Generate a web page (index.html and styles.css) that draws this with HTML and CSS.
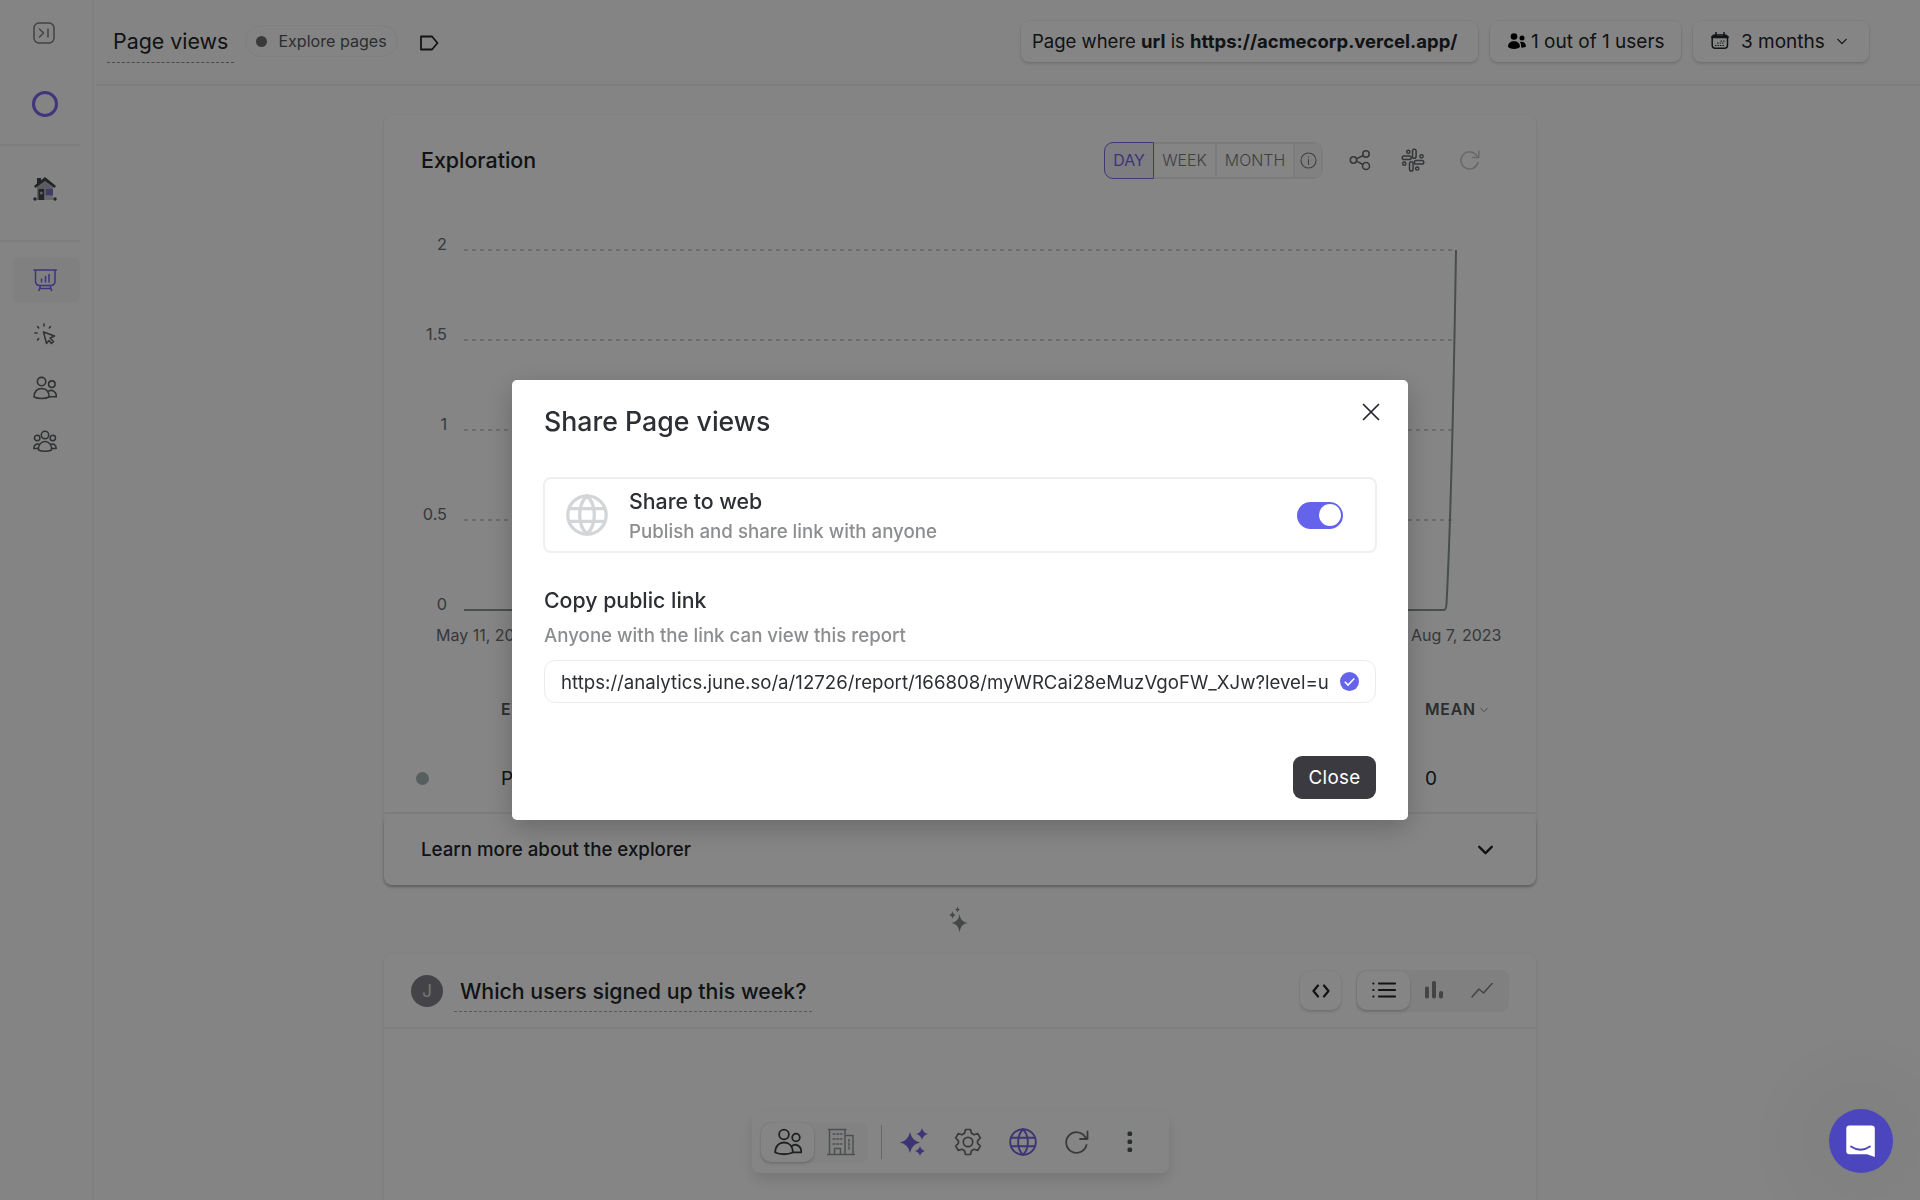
FILE: index.html
```html
<!DOCTYPE html>
<html lang="en">
<head>
    <meta charset="UTF-8">
    <meta name="viewport" content="width=device-width, initial-scale=1.0">
    <title>Page views</title>
    <link rel="stylesheet" href="styles.css">
</head>
<body>
    <!-- shared icons -->
    <svg class="defs" width="0" height="0">
        <symbol id="users" viewBox="0 0 28 28">
            <circle cx="10" cy="6.5" r="4.9"/>
            <circle cx="22" cy="9.5" r="3.8"/>
            <path d="M1.2 24.5C1.2 18 5 14.5 10 14.5S18.8 18 18.8 24.5C14 26.8 6 26.8 1.2 24.5z"/>
            <path d="M17.5 18.2C22 14.8 27.5 18 27.3 24.3H19"/>
        </symbol>
        <symbol id="globe" viewBox="0 0 28 28">
            <circle cx="14" cy="14" r="12.8"/>
            <path d="M14 1.2C7.5 7.5 7.5 20.5 14 26.8M14 1.2C20.5 7.5 20.5 20.5 14 26.8M2.2 9.7H25.8M2.2 18.3H25.8"/>
        </symbol>
        <symbol id="refresh" viewBox="0 0 24 24">
            <path d="M21.5 15A10.3 10.3 0 1 1 20.5 7.5L22 9M22.5 1.5V9H15"/>
        </symbol>
        <symbol id="chevron" viewBox="0 0 12 8">
            <path d="M1 1.5L6 6.5L11 1.5"/>
        </symbol>
    </svg>

    <div class="app">
        <nav class="sidebar">
            <div class="side-top">
                <svg class="icon collapse" width="22" height="22" viewBox="0 0 22 22"><rect x="1" y="1" width="20" height="20" rx="5"/><path d="M6.5 7L10.5 11L6.5 15M15 7V15"/></svg>
                <div class="ring"></div>
            </div>
            <div class="side-home">
                <svg width="24" height="24" viewBox="0 0 24 24">
                    <path fill="#b0b3bb" d="M4 10L12 4L20 10V23H4z"/>
                    <path fill="#44464c" d="M4 1H8V5L4 8zM12 0L23 9L21.5 11L12 4L2.5 11L1 9z"/>
                    <rect fill="#44464c" x="5.5" y="12" width="5.5" height="11"/>
                    <circle fill="#b9bbc2" cx="8.3" cy="16" r="1.5"/>
                    <rect fill="#7a76c8" x="13" y="12" width="7" height="6"/>
                    <rect fill="#c8cad2" x="12" y="19" width="8" height="4"/>
                    <circle fill="#44464c" cx="2" cy="22" r="1.7"/>
                    <circle fill="#44464c" cx="22" cy="22" r="1.7"/>
                </svg>
            </div>
            <div class="side-links">
                <a class="side-link active"><svg class="icon" width="24" height="24" viewBox="0 0 24 24"><path d="M1 2H23.5M2.5 2V13Q2.5 17.5 7 17.5H17.5Q22 17.5 22 13V2M7.5 17.5L6 22.5M17 17.5L18.5 22.5M7 20.5H17.5M8.5 11V14M12.5 8.5V14M16 6.5V14"/></svg></a>
                <a class="side-link"><svg class="icon" width="24" height="24" viewBox="0 0 24 24"><path d="M10.5 10L21.5 14L17 16L20.5 19.5L18.5 21.5L16 18.5L13.5 21.5zM11 2V4M4.5 4.5L5.7 6M17.5 4.5L16.3 6M2 11H4M4.5 18L5.7 16.5"/></svg></a>
                <a class="side-link"><svg class="icon thick" width="24" height="24"><use href="#users"/></svg></a>
                <a class="side-link"><svg class="icon" width="24" height="24" viewBox="0 0 24 24"><circle cx="12" cy="5" r="3.7"/><circle cx="4.2" cy="8" r="2.7"/><circle cx="19.8" cy="8" r="2.7"/><path d="M5.5 20C5 15 8 11.5 12 11.5S19 15 18.5 20C15 21.8 9 21.8 5.5 20zM6.5 14.5C3.5 13 .8 15 .8 18.5H5M17.5 14.5C20.5 13 23.2 15 23.2 18.5H19"/></svg></a>
            </div>
        </nav>

        <main class="main">
            <header class="header">
                <div class="page-title">Page views</div>
                <div class="pill"><span class="pill-dot"></span><span>Explore pages</span></div>
                <svg class="icon tag" width="19" height="16" viewBox="0 0 19 16"><path d="M1 1.5H12L17.5 8L12 14.5H1z"/></svg>
                <div class="filters">
                    <div class="box box-query"><span>Page where <b>url</b> is <b>https://acmecorp.vercel.app/</b></span></div>
                    <div class="box box-users">
                        <svg width="18" height="17" viewBox="0 0 18 17"><circle cx="6" cy="3.5" r="3.3"/><circle cx="14" cy="5" r="2.5"/><path d="M0 14C0 10 2.5 8.2 6 8.2S12 10 12 14C9 16.5 3 16.5 0 14zM12 9C15 8 18 10 18 13.5Q16 15 13.3 14.5Q13.5 11 12 9z"/></svg>
                        <span>1 out of 1 users</span>
                    </div>
                    <div class="box box-date">
                        <svg class="icon" width="18" height="18" viewBox="0 0 18 18"><rect x="1.2" y="3" width="15.3" height="13.3" rx="3"/><path d="M1.5 5H16.5" stroke-width="2.6"/><path d="M5 .5V4M13 .5V4"/><path d="M4.5 13.5H13.5M6.5 11H13.5M10 9H13.5" stroke-width="1.2" stroke-dasharray=".5 2"/></svg>
                        <span>3 months</span>
                        <svg class="icon chev" width="10" height="7"><use href="#chevron"/></svg>
                    </div>
                </div>
            </header>

            <div class="content">
                <section class="card">
                    <div class="card-head">
                        <h2>Exploration</h2>
                        <div class="period">
                            <span class="seg seg-day">DAY</span>
                            <span class="seg seg-week">WEEK</span>
                            <span class="seg seg-month">MONTH</span>
                            <span class="seg seg-info"><svg class="icon" width="17" height="17" viewBox="0 0 17 17"><circle cx="8.5" cy="8.5" r="7.5"/><path d="M8.5 7.5V12.5M8.5 4.7V5.2"/></svg></span>
                        </div>
                        <svg class="icon share" width="22" height="22" viewBox="0 0 22 22"><circle cx="4.5" cy="11" r="3.2"/><circle cx="17" cy="5" r="3.2"/><circle cx="17" cy="17" r="3.5"/><path d="M7.5 9.8L14 6.5M7.5 12.2L14 15.5"/></svg>
                        <svg class="icon slack" width="24" height="24" viewBox="0 0 24 24"><rect x="11.5" y="1.2" width="3.6" height="9" rx="1.8"/><rect x="13.3" y="12.5" width="9.5" height="3.6" rx="1.8"/><rect x="8.5" y="13.8" width="3.6" height="9.2" rx="1.8"/><rect x="1.2" y="8" width="9" height="3.6" rx="1.8"/><circle cx="7.3" cy="3.8" r="1.6"/><circle cx="20.5" cy="8.3" r="1.6"/><circle cx="16.2" cy="20.5" r="1.6"/><circle cx="3.3" cy="15.7" r="1.6"/></svg>
                        <svg class="icon redo" width="20" height="20"><use href="#refresh"/></svg>
                    </div>
                    <svg class="chart" width="1152" height="475" viewBox="384 205 1152 475">
                        <path class="grid-line" d="M464 250H1456M464 340H1456M464 430H1456M464 520H1456"/>
                        <path class="series" d="M464 610H1444Q1446 610 1446.5 604Q1452 500 1456 250"/>
                        <text x="447" y="250">2</text>
                        <text x="447" y="340">1.5</text>
                        <text x="447" y="430">1</text>
                        <text x="447" y="520">0.5</text>
                        <text x="447" y="610">0</text>
                        <text class="day" x="436" y="641">May 11, 2023</text>
                        <text class="day" x="1411" y="641">Aug 7, 2023</text>
                    </svg>
                    <div class="row row-head"><span></span><span>EVENT</span><span>MEAN<svg class="icon chev" width="8" height="6"><use href="#chevron"/></svg></span></div>
                    <div class="row"><span class="row-dot"></span><span>Page views</span><span>0</span></div>
                    <div class="card-foot"><span>Learn more about the explorer</span><svg class="icon chev" width="15" height="10"><use href="#chevron"/></svg></div>
                </section>

                <div class="between">
                    <svg width="20" height="26" viewBox="0 0 20 26"><path d="M10.5 8Q11.5 16 18.5 17Q11.5 18 10.5 26Q9.5 18 2.5 17Q9.5 16 10.5 8zM3.5 5Q4 8.5 7 9Q4 9.5 3.5 13Q3 9.5 0 9Q3 8.5 3.5 5zM8.5 .5Q9 3 11 3.5Q9 4 8.5 6.5Q8 4 6 3.5Q8 3 8.5 .5z"/></svg>
                </div>

                <section class="card card-users">
                    <div class="report-head">
                        <div class="avatar">J</div>
                        <div class="report-title">Which users signed up this week?</div>
                        <div class="code"><svg class="icon" width="20" height="14" viewBox="0 0 20 14"><path d="M7 1.5L2.5 7L7 12.5M13 1.5L17.5 7L13 12.5"/></svg></div>
                        <div class="views">
                            <span class="view active"><svg class="icon" width="24" height="16" viewBox="0 0 24 16"><path d="M7 1.5H23M7 8H23M7 14.5H23"/><path d="M1.2 1.5H1.6M1.2 8H1.6M1.2 14.5H1.6" stroke-width="1.8"/></svg></span>
                            <span class="view"><svg width="19" height="18" viewBox="0 0 19 18"><rect x="0" y="5.5" width="4" height="12" rx="1.8"/><rect x="7" y="0" width="4" height="17.5" rx="1.8"/><rect x="14" y="10" width="4" height="7.5" rx="1.8"/></svg></span>
                            <span class="view"><svg class="icon trend" width="22" height="16" viewBox="0 0 22 16"><path d="M1 15L8 7L12.5 11L21 1.5"/></svg></span>
                        </div>
                    </div>
                </section>
            </div>
        </main>
    </div>

    <div class="toolbar">
        <div class="levels">
            <span class="level active"><svg class="icon" width="28" height="28"><use href="#users"/></svg></span>
            <span class="level"><svg class="icon" width="28" height="28" viewBox="0 0 28 28"><path d="M.5 26.5H27.5M2.5 26V1.5H18V26M18 7.5H26V26M7.5 26V20.5H13.5V26M1.5 1.5H19"/><path d="M6 6H15M6 11H15M6 16H15M22 11.5V22" stroke-dasharray="2 1.8"/></svg></span>
        </div>
        <div class="divider"></div>
        <svg class="stars" width="28" height="28" viewBox="0 0 28 28"><path d="M10 4Q12 13 20 14.5Q12 16 10 25Q8 16 0 14.5Q8 13 10 4zM22 0Q23 5 28 6Q23 7 22 12Q21 7 16 6Q21 5 22 0zM20 18Q21 22 25 23Q21 24 20 28Q19 24 15 23Q19 22 20 18z"/></svg>
        <svg class="icon gear" width="28" height="28" viewBox="0 0 28 28"><circle cx="14" cy="14" r="4.7"/><path d="M11.5 1.5H16.5L17.5 5.2L20 6.7L23.8 5.6L26.3 10L23.6 12.6V15.4L26.3 18L23.8 22.4L20 21.3L17.5 22.8L16.5 26.5H11.5L10.5 22.8L8 21.3L4.2 22.4L1.7 18L4.4 15.4V12.6L1.7 10L4.2 5.6L8 6.7L10.5 5.2z"/></svg>
        <svg class="icon world" width="28" height="28"><use href="#globe"/></svg>
        <svg class="icon reload" width="24" height="24"><use href="#refresh"/></svg>
        <svg class="more" width="6" height="22" viewBox="0 0 6 22"><rect x=".5" y=".5" width="4.6" height="4.6" rx="1.5"/><rect x=".5" y="8.5" width="4.6" height="4.6" rx="1.5"/><rect x=".5" y="16.5" width="4.6" height="4.6" rx="1.5"/></svg>
    </div>

    <div class="overlay">
        <div class="modal">
            <div class="modal-head">
                <h1>Share Page views</h1>
                <svg class="icon close-x" width="18" height="18" viewBox="0 0 18 18"><path d="M1.5 1.5L16.5 16.5M16.5 1.5L1.5 16.5"/></svg>
            </div>
            <div class="share-box">
                <svg class="icon share-globe" width="44" height="44"><use href="#globe"/></svg>
                <div class="share-text">
                    <h3>Share to web</h3>
                    <p>Publish and share link with anyone</p>
                </div>
                <div class="toggle"><span class="knob"></span></div>
            </div>
            <h3>Copy public link</h3>
            <p class="hint">Anyone with the link can view this report</p>
            <div class="link-box">
                <div class="link">https://analytics.june.so/a/12726/report/166808/myWRCai28eMuzVgoFW_XJw?level=user</div>
                <svg width="19" height="19" viewBox="0 0 19 19"><circle cx="9.5" cy="9.5" r="9.5" fill="#6563ec"/><path d="M4.8 9.8L8 13L14.3 6.5" fill="none" stroke="#fff" stroke-width="1.6"/></svg>
            </div>
            <button class="close-btn">Close</button>
        </div>
    </div>

    <div class="chat">
        <svg width="30" height="33" viewBox="0 0 30 33"><path fill="#fff" d="M3.5 .5H25.5Q28.8 .5 28.8 3.8V32L21 29.3H3.5Q.3 29.3 .3 26V3.8Q.3 .5 3.5 .5z"/><path d="M5 21.5Q14.5 28 24 21.5" fill="none" stroke="#4b46bd" stroke-width="1.8" stroke-linecap="round"/></svg>
    </div>
</body>
</html>
```
FILE: styles.css
```css
* {
    box-sizing: border-box;
}
body {
    margin: 0;
    background: #fdfdfd;
    color: #212529;
    font-family: Inter, sans-serif;
    font-size: 19px;
    overflow: hidden;
}
h1, h2, h3, p {
    margin: 0;
    font-weight: 500;
}
.defs {
    position: absolute;
}
.icon {
    fill: none;
    stroke: currentColor;
    stroke-width: 1.5;
    stroke-linecap: round;
    stroke-linejoin: round;
}
.icon.thick {
    stroke-width: 1.8;
}
.app {
    display: flex;
    height: 1200px;
}

/* sidebar */
.sidebar {
    width: 94px;
    border-right: 2px solid #f4f4f6;
    color: #5a5e61;
}
.side-top {
    width: 80px;
    height: 146px;
    padding: 22px 0 0 33px;
    border-bottom: 2px solid #f2f2f3;
}
.side-top svg {
    display: block;
    color: #7b7f82;
}
.ring {
    width: 26px;
    height: 26px;
    margin: 47px 0 0 -1px;
    border: 3px solid #7a68ee;
    border-radius: 50%;
}
.side-home {
    width: 80px;
    height: 96px;
    padding: 31px 0 0 33px;
    border-bottom: 2px solid #f2f2f3;
}
.side-links {
    display: flex;
    flex-direction: column;
    gap: 10px;
    padding: 16px 0 0 13px;
}
.side-link {
    display: flex;
    align-items: center;
    justify-content: center;
    width: 67px;
    height: 44px;
    padding-right: 3px;
    border-radius: 6px;
}
.side-link.active {
    background: #f5f5f8;
    color: #7566e8;
}

/* header */
.main {
    flex: 1;
}
.header {
    display: flex;
    align-items: center;
    height: 86px;
    margin-left: 2px;
    padding: 0 51px 2px 11px;
    border-bottom: 2px solid #f2f2f3;
}
.page-title {
    height: 43px;
    padding: 0 6px;
    border-bottom: 1.5px dashed #8b8f92;
    font-size: 21.4px;
    line-height: 43px;
}
.pill {
    display: flex;
    align-items: center;
    gap: 11px;
    height: 32px;
    margin: 0 22px 0 11px;
    padding: 0 10px;
    border: 1px solid #f3f3f4;
    border-radius: 16px;
    color: #54585b;
    font-size: 16.1px;
}
.pill-dot {
    width: 11px;
    height: 11px;
    border-radius: 50%;
    background: #6f7073;
}
.tag {
    margin-top: 4px;
    stroke-width: 1.8;
}
.filters {
    display: flex;
    gap: 12px;
    margin-left: auto;
}
.box {
    display: flex;
    align-items: center;
    height: 41px;
    border-radius: 8px;
    background: #fff;
    box-shadow: 0 0 1px 1px rgba(0, 0, 0, .04), 0 2px 3px rgba(0, 0, 0, .12);
    line-height: 25px;
    white-space: nowrap;
}
.box-query {
    width: 457px;
    padding-left: 11px;
    font-size: 18.5px;
}
.box-users {
    width: 191px;
    padding-left: 18px;
    gap: 5px;
}
.box-date {
    width: 176px;
    padding-left: 18px;
    gap: 12px;
}

/* cards */
.content {
    padding: 29px 384px 0 290px;
}
.card {
    border-radius: 8px;
    background: #fff;
    box-shadow: 0 1px 3px 1px rgba(0, 0, 0, .06);
}
.card-head {
    display: flex;
    align-items: center;
    height: 90px;
    padding: 0 56px 0 37px;
    color: #66696c;
}
.card-head h2 {
    flex: 1;
    color: #212529;
    font-size: 21.4px;
}
.period {
    display: flex;
    height: 37px;
    border: 2px solid #ececee;
    border-radius: 10px;
    color: #777b7e;
    font-size: 15.9px;
    font-weight: 300;
}
.seg {
    display: flex;
    align-items: center;
    justify-content: center;
    border-left: 2px solid #ececee;
}
.seg-day {
    width: 50px;
    margin: -2px 0 -2px -2px;
    border: 1.5px solid #7a70d8;
    border-radius: 9px 0 0 9px;
    background: #f0f0fa;
    color: #7566e8;
    font-weight: 400;
}
.seg-week {
    width: 61px;
    border-left: none;
}
.seg-month {
    width: 78px;
}
.seg-info {
    width: 28px;
    background: #f8f8f8;
}
.seg-info .icon {
    stroke-width: 1.1;
}
.share {
    margin-left: 26px;
}
.slack {
    margin-left: 30px;
}
.redo {
    margin-left: 35px;
    color: #c4c6c8;
    stroke-width: 1.8;
}
.chart {
    display: block;
}
.chart text {
    fill: #6a6d70;
    font-size: 16.3px;
    text-anchor: end;
}
.chart .day {
    font-size: 16px;
    text-anchor: start;
}
.grid-line {
    stroke: #cfcfcf;
    stroke-width: 2;
    stroke-dasharray: 4 4;
}
.series {
    fill: none;
    stroke: #8b9494;
    stroke-width: 2;
}
.row {
    display: grid;
    grid-template-columns: 85px 924px auto;
    align-items: center;
    height: 76px;
    padding: 6px 0 0 32px;
    border-bottom: 2px solid #f0f0f0;
}
.row-head {
    height: 58px;
    padding-top: 0;
    border: none;
    color: #54585b;
    font-size: 15.8px;
    font-weight: 600;
    letter-spacing: .8px;
}
.row-head .chev {
    margin: 0 0 2px 4px;
    color: #8b8f92;
}
.row-dot {
    width: 13px;
    height: 13px;
    border-radius: 50%;
    background: #a9b4b2;
}
.card-foot {
    display: flex;
    align-items: center;
    justify-content: space-between;
    height: 71px;
    padding: 0 43px 0 37px;
    border-radius: 8px;
    box-shadow: 0 2px 3px rgba(0, 0, 0, .25);
    font-size: 18.7px;
    font-weight: 500;
}
.card-foot .chev {
    stroke-width: 1.9;
}
.between {
    display: flex;
    height: 69px;
    padding: 21px 0 0 565px;
    fill: #858b8b;
}
.card-users {
    height: 300px;
}
.report-head {
    display: flex;
    align-items: center;
    height: 75px;
    padding: 0 27px;
    border-bottom: 2px solid #f0f0f0;
}
.avatar {
    width: 32px;
    height: 32px;
    border-radius: 50%;
    background: #83828a;
    color: #e0e0e0;
    font-size: 17px;
    line-height: 32px;
    text-align: center;
}
.report-title {
    height: 42px;
    margin: 0 auto 0 11px;
    padding: 0 6px;
    border-bottom: 1.5px dashed #aaadb0;
    font-size: 21.3px;
    font-weight: 500;
    line-height: 42px;
}
.code, .view.active, .level.active {
    border-radius: 10px;
    background: #fff;
    box-shadow: 0 0 2px rgba(0, 0, 0, .08), 0 2px 3px rgba(0, 0, 0, .14);
}
.code {
    display: flex;
    align-items: center;
    justify-content: center;
    width: 41px;
    height: 39px;
    margin-right: 15px;
}
.code .icon, .view.active .icon {
    stroke-width: 2.2;
}
.views {
    display: flex;
    height: 42px;
    padding: 1px 3px 2px 1px;
    border-radius: 8px;
    background: #f6f6f7;
    color: #7f8385;
    fill: #7f8385;
}
.view {
    display: flex;
    align-items: center;
    justify-content: center;
    width: 48px;
}
.view.active {
    width: 53px;
    color: #212529;
}

/* floating toolbar */
.toolbar {
    position: fixed;
    left: 752px;
    top: 1111px;
    display: flex;
    align-items: center;
    width: 417px;
    height: 62px;
    padding-left: 8px;
    border-radius: 8px;
    background: #fff;
    box-shadow: 0 8px 14px rgba(0, 0, 0, .1), 0 0 16px rgba(0, 0, 0, .03);
    color: #6b6f72;
}
.levels {
    display: flex;
    height: 41px;
    padding: 1px;
    border-radius: 8px;
    background: #f9f9fa;
}
.level {
    display: flex;
    align-items: center;
    justify-content: center;
    width: 53px;
    color: #95999b;
}
.level.active {
    color: #3a3e41;
}
.level.active .icon {
    stroke-width: 1.8;
}
.divider {
    width: 1px;
    height: 34px;
    margin: 0 18px 0 13px;
    background: #c4c6c8;
}
.stars {
    fill: #7364e0;
}
.gear {
    margin-left: 26px;
    stroke-width: 1.7;
}
.world {
    margin-left: 27px;
    color: #7364e0;
    stroke-width: 1.9;
}
.reload {
    margin: 0 38px 0 28px;
    stroke-width: 1.8;
}
.more {
    fill: #54585b;
}

/* share dialog */
.overlay {
    position: fixed;
    inset: 0;
    display: flex;
    align-items: center;
    justify-content: center;
    background: rgba(0, 0, 0, .48);
}
.modal {
    display: flex;
    flex-direction: column;
    width: 896px;
    height: 440px;
    padding: 21px 32px;
    border-radius: 5px;
    background: #fff;
    box-shadow: 0 8px 28px rgba(0, 0, 0, .22);
    color: #2c2f33;
}
.modal h1 {
    font-size: 26.7px;
    line-height: 40px;
}
.modal h3 {
    font-size: 21.3px;
    line-height: 30px;
}
.modal p {
    color: #8b8d8f;
    font-size: 18.7px;
    line-height: 32px;
}
.modal-head {
    display: flex;
    justify-content: space-between;
    height: 76px;
}
.close-x {
    margin: 2px -4px 0 0;
    color: #212529;
    stroke-width: 1.7;
}
.share-box {
    display: flex;
    align-items: center;
    height: 76px;
    margin: 0 -1px 32px;
    padding: 0 32px 0 20px;
    border: 2px solid #efeff0;
    border-radius: 8px;
}
.share-globe {
    padding: 1px;
    color: #d3d6d8;
    stroke-width: 2.2;
}
.share-text {
    flex: 1;
    padding: 3px 0 0 20px;
}
.toggle {
    width: 46px;
    height: 27px;
    padding: 2.5px;
    border-radius: 14px;
    background: #6563ec;
}
.knob {
    display: block;
    width: 22px;
    height: 22px;
    margin-left: auto;
    border-radius: 50%;
    background: #fff;
}
.hint {
    margin-top: 5px;
}
.link-box {
    display: flex;
    align-items: center;
    height: 43px;
    margin-top: 8px;
    padding: 0 16px 0 16px;
    border: 1.5px solid #ececee;
    border-radius: 11px;
}
.link {
    width: 769px;
    margin-right: 10px;
    overflow: hidden;
    font-size: 18.65px;
    white-space: nowrap;
}
.close-btn {
    width: 83px;
    height: 43px;
    margin: auto 0 0 auto;
    border: none;
    border-radius: 9px;
    background: #3b3a41;
    color: #fff;
    font: 400 18.8px Inter, sans-serif;
    letter-spacing: .3px;
}
.chat {
    position: fixed;
    right: 27px;
    bottom: 27px;
    display: flex;
    align-items: center;
    justify-content: center;
    width: 64px;
    height: 64px;
    border-radius: 50%;
    background: #4b46bd;
    box-shadow: 0 0 80px 30px rgba(0, 0, 0, .04);
}
```
